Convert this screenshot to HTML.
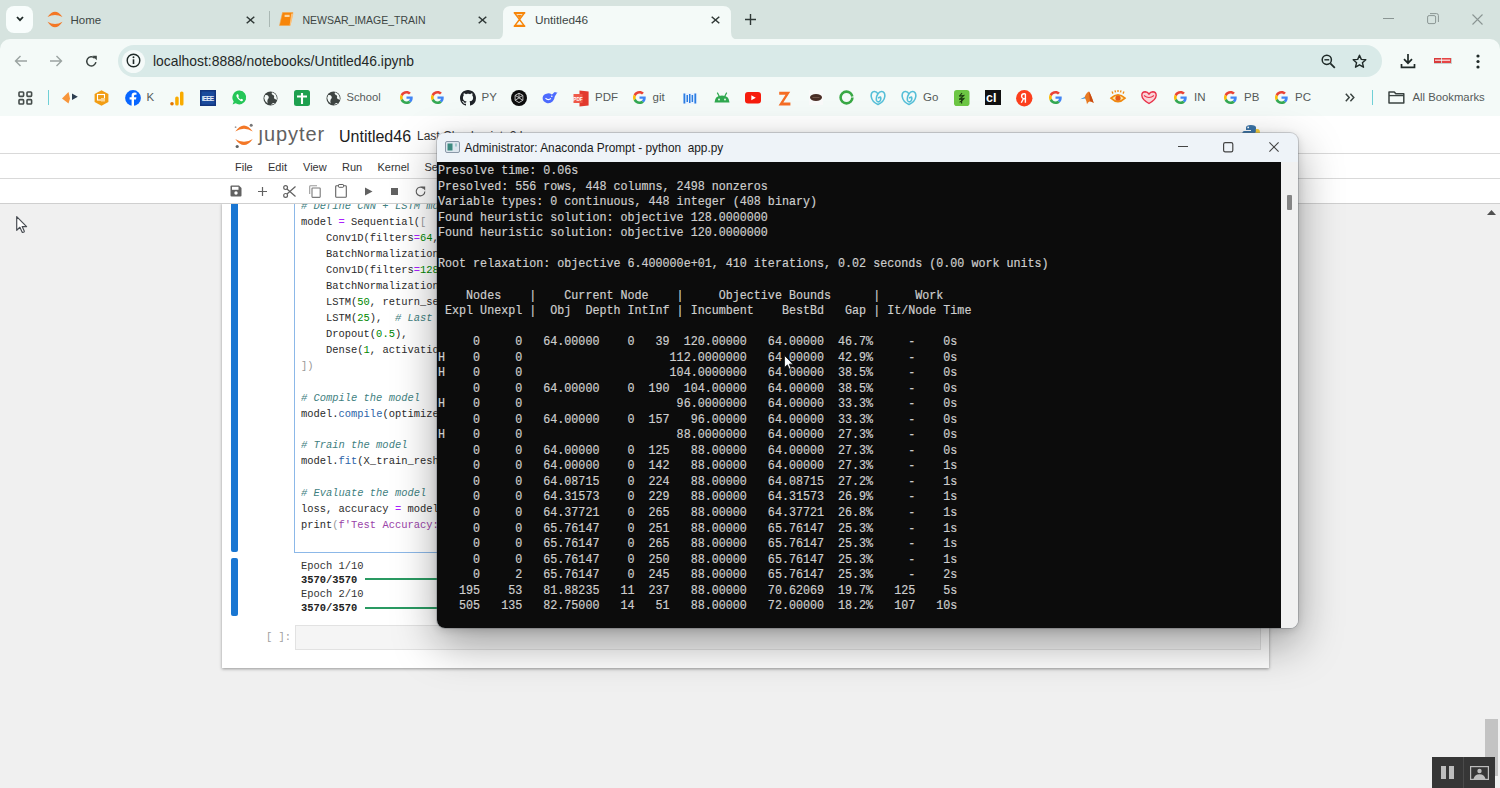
<!DOCTYPE html>
<html><head><meta charset="utf-8">
<style>
*{margin:0;padding:0;box-sizing:border-box}
html,body{width:1500px;height:788px;overflow:hidden;background:#f0f0f0;font-family:"Liberation Sans",sans-serif}
.a{position:absolute}
.t{position:absolute;white-space:pre;line-height:1}
svg{position:absolute;overflow:visible}
#tabbar{left:0;top:0;width:1500px;height:39px;background:#d6e3df}
#toolbar{left:0;top:39px;width:1500px;height:77px;background:#f4faf8;border-radius:10px 10px 0 0}
#omni{left:117.5px;top:45.3px;width:1264.5px;height:32px;border-radius:16px;background:#d9eae8}
#page{left:0;top:116px;width:1500px;height:672px;background:#f0f0f0}
#jhead{left:0;top:116px;width:1500px;height:38px;background:#fff;border-bottom:1px solid #d9d9d9}
#menubar{left:0;top:154px;width:1500px;height:25px;background:#fff;border-bottom:1px solid #d9d9d9}
#tbar{left:0;top:179px;width:1500px;height:24.6px;background:#fff;border-bottom:1px solid #cfcfcf}
#nb{left:222px;top:203px;width:1047px;height:465px;background:#fff;box-shadow:0 1px 3px rgba(0,0,0,.38)}
.code{position:absolute;left:301px;white-space:pre;font-family:"Liberation Mono",monospace;font-size:11.38px;line-height:15.93px;color:#2a2a2a;transform:scaleX(0.917);transform-origin:0 0}
.cm{color:#3f7f7f;font-style:italic}
.op{color:#aa22ff}
.nu{color:#008800}
.pr{color:#2b63a8}
.st{color:#9a3fa8}
#term{left:437px;top:133px;width:861px;height:495px;border-radius:8px;background:#eef3f8;box-shadow:0 16px 44px rgba(0,0,0,.36),0 2px 8px rgba(0,0,0,.14),0 0 0 1px rgba(110,120,130,.28);overflow:hidden}
#tblack{left:0;top:28.5px;width:843.5px;height:466.5px;background:#0c0c0c}
#tscroll{left:843.5px;top:28.5px;width:18px;height:466.5px;background:#f1f1f1}
.tl{position:absolute;left:0.9px;top:30.3px;white-space:pre;color:#d0d0d0;-webkit-text-stroke:0.2px #c8c8c8;font-size:12.7px;transform:scaleX(0.9218);transform-origin:0 0;line-height:15.525px;font-family:"Liberation Mono",monospace}

</style></head><body>
<div id="tabbar" class="a"></div>
<div class="a" style="left:0;top:30px;width:1500px;height:30px;background:#d6e3df"></div>
<div id="toolbar" class="a"></div>
<!-- tab dropdown -->
<div class="a" style="left:6px;top:6px;width:27px;height:27px;border-radius:8px;background:#f8fdfc"></div>
<svg style="left:16px;top:16px" width="8" height="6"><path d="M1 1 L4 4.2 L7 1" fill="none" stroke="#1f2a28" stroke-width="1.8"/></svg>
<!-- home tab -->
<svg style="left:47px;top:11px" width="16" height="17" viewBox="0 0 16 17"><path d="M0.5 6 Q8 -4.6 15.5 6 Q8 2 0.5 6Z" fill="#f37726"/><path d="M0.5 10.7 Q8 21.9 15.5 10.7 Q8 15.3 0.5 10.7Z" fill="#f37726"/></svg>
<div class="t" style="left:70.5px;top:15px;font-size:11.5px;color:#3d4644">Home</div>
<svg style="left:246px;top:15.5px" width="9" height="8"><path d="M0.7 0.7 L8.3 7.3 M8.3 0.7 L0.7 7.3" stroke="#2f3836" stroke-width="1.5"/></svg>
<div class="a" style="left:269px;top:11px;width:1px;height:16px;background:#aab8b4"></div>
<!-- newsar tab -->
<svg style="left:279px;top:12px" width="15" height="14" viewBox="0 0 15 14"><path d="M3.5 0.5 H14 L11 13.5 H0.5Z" fill="#f7860a" stroke="#f4a64a" stroke-width="0.6"/><rect x="5.6" y="2.8" width="5" height="2.2" fill="#fcd6a0"/><path d="M12.2 1.5 L14.3 2 L11.6 13.5 H10.6Z" fill="#fbc27d"/></svg>
<div class="t" style="left:302.5px;top:15.2px;font-size:10.5px;color:#3d4644">NEWSAR_IMAGE_TRAIN</div>
<svg style="left:478px;top:15.5px" width="9" height="8"><path d="M0.7 0.7 L8.3 7.3 M8.3 0.7 L0.7 7.3" stroke="#2f3836" stroke-width="1.5"/></svg>
<!-- active tab -->
<svg style="left:495px;top:6px" width="246" height="34" viewBox="0 0 246 34"><path d="M0 34 Q8 34 8 26 V8 Q8 0 16 0 H228 Q236 0 236 8 V26 Q236 34 244 34 Z" fill="#f4faf8"/></svg>
<svg style="left:513px;top:12px" width="13" height="15" viewBox="0 0 13 15"><path d="M0.8 0.8 H12.2 M0.8 14.2 H12.2" stroke="#f7860a" stroke-width="1.6"/><path d="M2 1.6 L6.5 7.5 L11 1.6Z M2 13.4 L6.5 7.5 L11 13.4Z" fill="none" stroke="#f7860a" stroke-width="1.5"/><path d="M4 3 H9 L6.5 6.3Z" fill="#f7860a"/></svg>
<div class="t" style="left:535px;top:14.8px;font-size:11.8px;color:#3d4644">Untitled46</div>
<svg style="left:710.5px;top:15.5px" width="9" height="8"><path d="M0.7 0.7 L8.3 7.3 M8.3 0.7 L0.7 7.3" stroke="#2f3836" stroke-width="1.5"/></svg>
<svg style="left:745px;top:14px" width="11" height="11"><path d="M5.5 0 V11 M0 5.5 H11" stroke="#2f3836" stroke-width="1.4"/></svg>
<!-- window controls -->
<div class="a" style="left:1383px;top:18px;width:11px;height:1px;background:#8a9593"></div>
<svg style="left:1427px;top:13px" width="12" height="12"><rect x="0.6" y="2.6" width="8" height="8" rx="1.5" fill="none" stroke="#8a9593" stroke-width="1"/><path d="M3 0.6 H9.5 Q11.4 0.6 11.4 2.5 V9" fill="none" stroke="#8a9593" stroke-width="1"/></svg>
<svg style="left:1472px;top:14px" width="11" height="11"><path d="M0.5 0.5 L10.5 10.5 M10.5 0.5 L0.5 10.5" stroke="#8a9593" stroke-width="1.1"/></svg>
<!-- toolbar -->
<svg style="left:14px;top:55px" width="14" height="12"><path d="M13 6 H1.5 M6.5 1 L1.5 6 L6.5 11" fill="none" stroke="#9aa3a1" stroke-width="1.4"/></svg>
<svg style="left:49px;top:55px" width="14" height="12"><path d="M1 6 H12.5 M7.5 1 L12.5 6 L7.5 11" fill="none" stroke="#9aa3a1" stroke-width="1.4"/></svg>
<svg style="left:85px;top:55px" width="13" height="13" viewBox="0 0 13 13"><path d="M10.9 7.2 A4.6 4.6 0 1 1 9.6 3.1" fill="none" stroke="#3b4442" stroke-width="1.5"/><path d="M7.4 0.8 H11.8 V5.2Z" fill="#3b4442"/></svg>
<div id="omni" class="a"></div>
<div class="a" style="left:122px;top:49.8px;width:23px;height:23px;border-radius:12px;background:#f5faf9"></div>
<svg style="left:126px;top:53px" width="15" height="15"><circle cx="7.5" cy="7.5" r="6.3" fill="none" stroke="#1f2a28" stroke-width="1.4"/><path d="M7.5 6.3 V11" stroke="#1f2a28" stroke-width="1.6"/><circle cx="7.5" cy="4.2" r="0.95" fill="#1f2a28"/></svg>
<div class="t" style="left:153px;top:54.9px;font-size:13.9px;color:#1f2726">localhost:8888/notebooks/Untitled46.ipynb</div>
<svg style="left:1321px;top:54px" width="15" height="15"><circle cx="5.8" cy="5.8" r="4.6" fill="none" stroke="#1f2a28" stroke-width="1.5"/><path d="M3.4 5.8 H8.2" stroke="#1f2a28" stroke-width="1.4"/><path d="M9.3 9.3 L13.8 13.8" stroke="#1f2a28" stroke-width="1.8"/></svg>
<svg style="left:1352px;top:54px" width="15" height="15" viewBox="0 0 15 15"><path d="M7.5 1.2 L9.3 5.4 L13.8 5.7 L10.4 8.7 L11.5 13.2 L7.5 10.8 L3.5 13.2 L4.6 8.7 L1.2 5.7 L5.7 5.4Z" fill="none" stroke="#1f2a28" stroke-width="1.4" stroke-linejoin="round"/></svg>
<svg style="left:1400px;top:53px" width="16" height="16"><path d="M8 1 V10 M4 6.2 L8 10.2 L12 6.2" fill="none" stroke="#1f2a28" stroke-width="1.7"/><path d="M1.5 11 V14.4 H14.5 V11" fill="none" stroke="#1f2a28" stroke-width="1.7"/></svg>
<svg style="left:1434px;top:57px" width="19" height="8"><rect x="0" y="1" width="18" height="6" fill="#c9d3d1"/><rect x="0" y="1" width="7" height="5" fill="#d93a3a"/><rect x="8" y="1" width="9" height="5" fill="#e64545"/><rect x="1" y="2.5" width="15" height="1.5" fill="#fff" opacity=".7"/></svg>
<svg style="left:1476px;top:54px" width="4" height="15"><circle cx="2" cy="2" r="1.6" fill="#1f2a28"/><circle cx="2" cy="7.5" r="1.6" fill="#1f2a28"/><circle cx="2" cy="13" r="1.6" fill="#1f2a28"/></svg>
<!-- bookmarks -->
<svg style="left:18px;top:90.5px" width="15" height="14"><g fill="none" stroke="#444c4a" stroke-width="1.6"><rect x="1" y="1" width="4.6" height="4.4" rx="0.8"/><rect x="9" y="1" width="4.6" height="4.4" rx="0.8"/><rect x="1" y="8.6" width="4.6" height="4.4" rx="0.8"/><rect x="9" y="8.6" width="4.6" height="4.4" rx="0.8"/></g></svg>
<div class="a" style="left:47.5px;top:90px;width:1.5px;height:15px;background:#6fd0d6"></div>
<svg style="left:62px;top:92px" width="17" height="12"><path d="M0 6.5 L6.5 0 L8 6.5 L6.5 11.5Z" fill="#f7953a"/><path d="M10 1.5 L15.8 4.8 L10 8Z" fill="#2c3e50"/></svg>
<svg style="left:94px;top:89.5px" width="15" height="16"><path d="M7.5 0.3 L14.4 4 V12 L7.5 15.7 L0.6 12 V4Z" fill="#f29d13"/><rect x="3.5" y="4.5" width="7" height="5.5" fill="none" stroke="#fff" stroke-width="1.1"/><rect x="7" y="8" width="4" height="3.5" fill="#fbd493"/></svg>
<svg style="left:125px;top:89.5px" width="16" height="16"><circle cx="8" cy="8" r="7.9" fill="#0866ff"/><path d="M9 16 V9.6 H11 L11.4 7.3 H9 V5.9 Q9 4.8 10.2 4.8 H11.5 V2.8 Q10.6 2.6 9.7 2.6 Q6.6 2.6 6.6 5.7 V7.3 H4.6 V9.6 H6.6 V16Z" fill="#fff"/></svg>
<div class="t" style="left:146.5px;top:91.8px;font-size:11.5px;color:#555b5a">K</div>
<svg style="left:170px;top:90.5px" width="14" height="15"><rect x="10" y="0.5" width="3.5" height="14" rx="1.6" fill="#f9ab00"/><rect x="5.2" y="5.5" width="3.5" height="9" rx="1.6" fill="#f9ab00"/><circle cx="2" cy="12.8" r="1.8" fill="#e37400"/></svg>
<svg style="left:200px;top:90px" width="16" height="16"><rect width="16" height="16" fill="#12357e"/><rect x="1.5" y="1.5" width="13" height="13" fill="#1a4a9c"/><text x="8" y="11" font-family="Liberation Sans" font-size="6.6" font-weight="bold" fill="#e8eef8" text-anchor="middle" textLength="12.5">IEEE</text></svg>
<svg style="left:232px;top:89.8px" width="15" height="15.5" viewBox="0 0 15 15.5"><path d="M7.6 0.6 A6.9 6.9 0 1 1 3.6 13.3 L0.6 14.6 L1.7 11.5 A6.9 6.9 0 0 1 7.6 0.6Z" fill="#25c658"/><path d="M5 4.2 Q4 5 4.6 6.8 Q5.8 9.6 8.6 10.9 Q10.2 11.5 10.9 10.5 L10.9 9.5 L9.3 8.7 L8.6 9.4 Q7 8.6 6.2 7 L6.9 6.3 L6.1 4.3Z" fill="#fff"/></svg>
<svg style="left:263px;top:90.5px" width="15" height="15" viewBox="0 0 15 15"><circle cx="7.5" cy="7.5" r="7" fill="#3d4442"/><path d="M2.3 4 Q4.5 3.5 5.5 5.3 Q6.5 7.3 4.8 8.2 Q4 9.5 4.6 12.5 Q1.5 10 1.2 7Z M9 1.2 Q8.2 2.8 9.2 3.6 Q11 4 11.2 5.5 Q10.3 7.2 11.8 8 Q13.6 8.6 13.8 9.3 Q14.3 5 11.5 2.5Z M8 13.8 Q9 12.3 10.5 12 Q12 12.2 12.4 11.8 Q11 13.4 8 13.8Z" fill="#f4faf8"/></svg>
<svg style="left:293.5px;top:89.8px" width="16" height="16"><rect width="16" height="16" rx="2.5" fill="#1ea04f"/><path d="M8 3 V14 M3 6.5 H13" stroke="#fff" stroke-width="2.1"/></svg>
<svg style="left:326px;top:90.5px" width="15" height="15" viewBox="0 0 15 15"><circle cx="7.5" cy="7.5" r="7" fill="#3d4442"/><path d="M2.3 4 Q4.5 3.5 5.5 5.3 Q6.5 7.3 4.8 8.2 Q4 9.5 4.6 12.5 Q1.5 10 1.2 7Z M9 1.2 Q8.2 2.8 9.2 3.6 Q11 4 11.2 5.5 Q10.3 7.2 11.8 8 Q13.6 8.6 13.8 9.3 Q14.3 5 11.5 2.5Z M8 13.8 Q9 12.3 10.5 12 Q12 12.2 12.4 11.8 Q11 13.4 8 13.8Z" fill="#f4faf8"/></svg>
<div class="t" style="left:346.5px;top:91.8px;font-size:11.2px;color:#555b5a">School</div>
<svg width="0" height="0" style="left:0;top:0"><defs>
<symbol id="gg" viewBox="0 0 48 48"><path fill="#EA4335" d="M24 9.5c3.54 0 6.71 1.22 9.21 3.6l6.85-6.85C35.9 2.38 30.47 0 24 0 14.62 0 6.51 5.38 2.56 13.22l7.98 6.19C12.43 13.72 17.74 9.5 24 9.5z"/><path fill="#4285F4" d="M46.98 24.55c0-1.57-.15-3.09-.38-4.55H24v9.02h12.94c-.58 2.96-2.26 5.48-4.78 7.18l7.73 6c4.51-4.18 7.09-10.36 7.09-17.65z"/><path fill="#FBBC05" d="M10.53 28.59c-.48-1.45-.76-2.99-.76-4.59s.27-3.14.76-4.59l-7.98-6.19C.92 16.46 0 20.12 0 24c0 3.88.92 7.54 2.56 10.78l7.97-6.19z"/><path fill="#34A853" d="M24 48c6.48 0 11.93-2.13 15.89-5.81l-7.73-6c-2.15 1.45-4.92 2.3-8.16 2.3-6.26 0-11.57-4.22-13.47-9.91l-7.98 6.19C6.51 42.62 14.62 48 24 48z"/></symbol>
<symbol id="globe" viewBox="0 0 15 15"><circle cx="7.5" cy="7.5" r="7" fill="#3d4442"/><path d="M2.3 4 Q4.5 3.5 5.5 5.3 Q6.5 7.3 4.8 8.2 Q4 9.5 4.6 12.5 Q1.5 10 1.2 7Z M9 1.2 Q8.2 2.8 9.2 3.6 Q11 4 11.2 5.5 Q10.3 7.2 11.8 8 Q13.6 8.6 13.8 9.3 Q14.3 5 11.5 2.5Z" fill="#f4faf8"/></symbol>
<symbol id="gd" viewBox="0 0 16 16"><path d="M8 14.5 Q2 12 1.2 6.5 Q0.8 2 4.2 1.5 Q6.5 1.3 8 3.8 Q9.5 1.3 11.8 1.5 Q15.2 2 14.8 6.5 Q14 12 8 14.5Z M8 3.8 Q5.8 7 6.5 10.5 Q7.5 12.5 9.5 11.5 Q11.5 10 10.5 7 L8 8" fill="none" stroke="#55bfd8" stroke-width="1.6" stroke-linejoin="round"/></symbol>
</defs></svg>
<svg style="left:399.5px;top:91px" width="13" height="13"><use href="#gg" width="13" height="13"/></svg>
<svg style="left:430.5px;top:91px" width="13" height="13"><use href="#gg" width="13" height="13"/></svg>
<svg style="left:460px;top:89.8px" width="16" height="16" viewBox="0 0 16 16"><path fill="#1f2328" d="M8 0C3.58 0 0 3.58 0 8c0 3.54 2.29 6.53 5.47 7.59.4.07.55-.17.55-.38 0-.19-.01-.82-.01-1.49-2.01.37-2.53-.49-2.69-.94-.09-.23-.48-.94-.82-1.13-.28-.15-.68-.52-.01-.53.63-.01 1.08.58 1.23.82.72 1.21 1.87.87 2.33.66.07-.52.28-.87.51-1.07-1.78-.2-3.64-.89-3.64-3.95 0-.87.31-1.59.82-2.15-.08-.2-.36-1.02.08-2.12 0 0 .67-.21 2.2.82.64-.18 1.32-.27 2-.27.68 0 1.36.09 2 .27 1.53-1.04 2.2-.82 2.2-.82.44 1.1.16 1.92.08 2.12.51.56.82 1.27.82 2.15 0 3.07-1.87 3.75-3.65 3.95.29.25.54.73.54 1.48 0 1.07-.01 1.93-.01 2.2 0 .21.15.46.55.38A8.013 8.013 0 0016 8c0-4.42-3.58-8-8-8z"/></svg>
<div class="t" style="left:481.5px;top:91.8px;font-size:11.5px;color:#555b5a">PY</div>
<svg style="left:510.5px;top:89.8px" width="16" height="16"><circle cx="8" cy="8" r="8" fill="#0d0d0d"/><g fill="none" stroke="#cfcfcf" stroke-width="0.9"><path d="M8 3.2 L11.9 5.4 V10.3 L8 12.6 L4.1 10.3 V5.4Z"/><path d="M8 3.2 V7.9 L11.9 10.3 M8 7.9 L4.1 10.3 M4.1 5.4 L8 7.6 L11.9 5.4"/></g></svg>
<svg style="left:541.5px;top:91px" width="16" height="13" viewBox="0 0 16 13"><path d="M15.5 1.2 Q14.2 1.8 13.6 1.2 Q12.8 0.6 12 1.6 Q11 3 9.8 3.4 Q8 2.2 5.5 2.4 Q1.2 2.8 0.6 6.8 Q0.5 10.6 4.6 12 Q8.2 12.8 10.8 10.2 Q12.6 8 12.8 5.6 Q13.6 4 15.5 1.2Z" fill="#4d6bfe"/><path d="M3.5 7.2 Q6 9.8 9 7.6" fill="none" stroke="#fff" stroke-width="1.2"/><circle cx="9.8" cy="5.2" r="0.8" fill="#fff"/></svg>
<svg style="left:573px;top:89.5px" width="16" height="17" viewBox="0 0 16 17"><path d="M6.5 0.5 L15.6 1.5 V15.5 L6.5 16.5Z" fill="#e23a2e"/><rect x="0.5" y="4" width="9" height="9" fill="#ef5a4a"/><text x="5" y="10.6" font-family="Liberation Sans" font-size="4.8" font-weight="bold" fill="#fff" text-anchor="middle">PDF</text></svg>
<div class="t" style="left:595px;top:91.8px;font-size:11.5px;color:#555b5a">PDF</div>
<svg style="left:632.5px;top:91px" width="13" height="13"><use href="#gg" width="13" height="13"/></svg>
<div class="t" style="left:652.5px;top:91.8px;font-size:11.5px;color:#555b5a">git</div>
<svg style="left:683px;top:90.5px" width="14" height="15"><rect x="0" y="2" width="14" height="11" fill="#e9f2ff"/><g fill="#2a7de1"><rect x="0.5" y="2.5" width="1.8" height="10"/><rect x="3.5" y="4" width="1.5" height="7"/><rect x="6" y="3" width="1.5" height="9"/><rect x="8.6" y="4" width="1.5" height="7"/><rect x="11.4" y="2.5" width="1.8" height="10"/></g></svg>
<svg style="left:714px;top:92px" width="16" height="11" viewBox="0 0 16 11"><path d="M0.5 10.5 Q0.8 3.8 8 3.6 Q15.2 3.8 15.5 10.5Z" fill="#2fa84f"/><path d="M3.3 0.6 L5.2 4.2 M12.7 0.6 L10.8 4.2" stroke="#2fa84f" stroke-width="1.2"/><circle cx="5" cy="7.5" r="0.9" fill="#f4faf8"/><circle cx="11" cy="7.5" r="0.9" fill="#f4faf8"/></svg>
<svg style="left:745px;top:91.5px" width="16" height="12"><rect width="16" height="11.5" rx="3" fill="#f61c0d"/><path d="M6.3 3.3 L10.8 5.75 L6.3 8.2Z" fill="#fff"/></svg>
<svg style="left:778px;top:90.5px" width="13" height="15" viewBox="0 0 13 15"><path d="M1.2 0.8 H12.2 L5.3 11.4 H12.4 V14.4 H0.6 L7.5 3.8 H1.2Z" fill="#f56d24"/></svg>
<svg style="left:809px;top:90px" width="14" height="15"><rect x="0" y="0" width="14" height="15" fill="#fafafa"/><ellipse cx="7" cy="7.5" rx="6" ry="3.4" fill="#4a2d25"/><path d="M3.5 7.5 H10.5" stroke="#8a6d60" stroke-width="0.6"/></svg>
<svg style="left:839px;top:90px" width="15" height="15"><circle cx="7.5" cy="7.5" r="5.9" fill="none" stroke="#39a845" stroke-width="2.6" stroke-dasharray="35 2"/></svg>
<svg style="left:870px;top:89.5px" width="16" height="16"><use href="#gd" width="16" height="16"/></svg>
<svg style="left:901px;top:89.5px" width="16" height="16"><use href="#gd" width="16" height="16"/></svg>
<div class="t" style="left:923px;top:91.8px;font-size:11.5px;color:#555b5a">Go</div>
<svg style="left:954px;top:89.5px" width="15.5" height="16"><rect width="15.5" height="16" rx="2.8" fill="#6cc644"/><path d="M8 3 Q6.2 5.5 5.2 6.2 L9.6 5.6 Q7.5 8 5.2 9.3 L9.8 8.6 Q8 11.2 5.6 12.2 M7.6 9 V13.5" fill="none" stroke="#1d3d12" stroke-width="1.2"/></svg>
<svg style="left:985px;top:90px" width="16" height="15"><rect width="16" height="15" fill="#111"/><text x="1" y="12.3" font-family="Liberation Sans" font-size="12.5" font-weight="bold" fill="#fff">cl</text></svg>
<svg style="left:1016px;top:89.5px" width="16.5" height="16.5"><circle cx="8.25" cy="8.25" r="8.2" fill="#fc3f1d"/><path d="M9.4 3.8 H8.2 Q5.6 3.8 5.6 6.3 Q5.6 8 7.4 8.7 L5.3 12.8 M9.4 3.8 V12.8 M9.4 8.7 H7.8" fill="none" stroke="#fff" stroke-width="1.4"/></svg>
<svg style="left:1049px;top:91px" width="13" height="13"><use href="#gg" width="13" height="13"/></svg>
<svg style="left:1080px;top:90.5px" width="14" height="14" viewBox="0 0 14 14"><path d="M0.3 8.3 L4.6 6 L6.2 7.2 Z" fill="#3a8fd6"/><path d="M4.6 6 Q7 0.8 9 0.6 Q10.5 2.5 13.7 12 Q11.5 10 9.6 10.6 Q7.8 11.5 7 13.2 Q6.5 9.5 4.6 6Z" fill="#e87a22"/><path d="M9 0.6 Q10.5 2.5 13.7 12 Q11.5 10 10 10.2Z" fill="#c94b12"/></svg>
<svg style="left:1110px;top:90px" width="16" height="14" viewBox="0 0 16 14"><path d="M1 8.2 Q8 1.4 15 8.2 Q8 15 1 8.2Z" fill="#fde9a8" stroke="#f08a10" stroke-width="1.7"/><circle cx="8" cy="8.2" r="2.6" fill="#e55a1a"/><path d="M3 3.6 L2 1.5 M5.5 2.4 L5 0.3 M8 2 V0 M10.5 2.4 L11 0.3 M13 3.6 L14 1.5" stroke="#f08a10" stroke-width="1.3"/></svg>
<svg style="left:1141px;top:91px" width="16" height="13" viewBox="0 0 16 13"><path d="M8 12.5 Q1 8.5 0.8 4.2 Q1 0.8 4.2 0.8 Q6.6 0.9 8 3 Q9.4 0.9 11.8 0.8 Q15 0.8 15.2 4.2 Q15 8.5 8 12.5Z" fill="#fbd3d8" stroke="#e8334a" stroke-width="1.4"/><path d="M3 4.5 Q8 8.5 13 4.5" fill="none" stroke="#e8334a" stroke-width="1.1"/></svg>
<svg style="left:1174px;top:91px" width="13" height="13"><use href="#gg" width="13" height="13"/></svg>
<div class="t" style="left:1194px;top:91.8px;font-size:11.5px;color:#555b5a">IN</div>
<svg style="left:1224px;top:91px" width="13" height="13"><use href="#gg" width="13" height="13"/></svg>
<div class="t" style="left:1244px;top:91.8px;font-size:11.5px;color:#555b5a">PB</div>
<svg style="left:1275px;top:91px" width="13" height="13"><use href="#gg" width="13" height="13"/></svg>
<div class="t" style="left:1295px;top:91.8px;font-size:11.5px;color:#555b5a">PC</div>
<svg style="left:1345px;top:93px" width="10" height="9"><path d="M0.8 0.8 L4.2 4.5 L0.8 8.2 M5.4 0.8 L8.8 4.5 L5.4 8.2" fill="none" stroke="#3b4442" stroke-width="1.5"/></svg>
<div class="a" style="left:1371.5px;top:90px;width:1.5px;height:15px;background:#6fd0d6"></div>
<svg style="left:1388px;top:90.5px" width="17" height="13"><path d="M1 1 H6.3 L7.8 2.8 H15.8 V12 H1Z" fill="none" stroke="#3b4442" stroke-width="1.5" stroke-linejoin="round"/><path d="M1 4.6 H15.8" stroke="#3b4442" stroke-width="1.3"/></svg>
<div class="t" style="left:1412.5px;top:91.8px;font-size:11.3px;color:#555b5a">All Bookmarks</div>
<div id="page" class="a"></div>
<div id="nb" class="a"></div>
<!-- blue bars -->
<div class="a" style="left:231px;top:190px;width:7px;height:362px;background:#1976d2;border-radius:0 0 2px 2px"></div>
<div class="a" style="left:231px;top:557.5px;width:7px;height:58px;background:#1976d2;border-radius:2px"></div>
<!-- code input border -->
<div class="a" style="left:294px;top:190px;width:980px;height:362.5px;border:1px solid #8cb8e8;border-left-width:1.5px;background:#fff"></div>
<div class="code" style="top:199.4px"><span class="cm"># Define CNN + LSTM model</span>
model <span class="op">=</span> Sequential(<span style="color:#999">[</span>
    Conv1D(filters<span class="op">=</span><span class="nu">64</span>, kernel_size<span class="op">=</span><span class="nu">3</span>, activation<span class="op">=</span><span class="st">'relu'</span>)
    BatchNormalization(),
    Conv1D(filters<span class="op">=</span><span class="nu">128</span>, kernel_size<span class="op">=</span><span class="nu">3</span>, activation<span class="op">=</span><span class="st">'relu'</span>)
    BatchNormalization(),
    LSTM(<span class="nu">50</span>, return_sequences<span class="op">=</span>True),
    LSTM(<span class="nu">25</span>),  <span class="cm"># Last LSTM layer</span>
    Dropout(<span class="nu">0.5</span>),
    Dense(<span class="nu">1</span>, activation<span class="op">=</span><span class="st">'sigmoid'</span>)
<span style="color:#999">])</span>

<span class="cm"># Compile the model</span>
model.<span class="pr">compile</span>(optimizer<span class="op">=</span><span class="st">'adam'</span>)

<span class="cm"># Train the model</span>
model.<span class="pr">fit</span>(X_train_reshaped, y_train)

<span class="cm"># Evaluate the model</span>
loss, accuracy <span class="op">=</span> model.evaluate(X_test)
print<span style="color:#999">(</span><span class="st">f'Test Accuracy: {accuracy}'</span>)
</div>
<!-- output -->
<div class="code" style="top:558.5px;line-height:14.3px;color:#333">Epoch 1/10
<b style="color:#222">3570/3570</b>
Epoch 2/10
<b style="color:#222">3570/3570</b></div>
<div class="a" style="left:365px;top:578px;width:80px;height:2px;background:#2a9a62"></div>
<div class="a" style="left:365px;top:607px;width:80px;height:2px;background:#2a9a62"></div>
<!-- empty cell -->
<div class="code" style="left:265.5px;top:630px;color:#a0a0a0">[ ]:</div>
<div class="a" style="left:294.5px;top:625px;width:966px;height:25px;border:1px solid #e2e2e2;background:#f5f5f5"></div>
<!-- header -->
<div id="jhead" class="a"></div>
<svg style="left:234px;top:123px" width="20" height="25" viewBox="0 0 20 25"><path d="M1.2 8.6 Q10 -3.6 18.8 8.6 Q10 2.8 1.2 8.6Z" fill="#f37726"/><path d="M1.2 15.9 Q10 28.2 18.8 15.9 Q10 21.6 1.2 15.9Z" fill="#f37726"/><circle cx="17.2" cy="2.2" r="1.5" fill="#767677"/><circle cx="3.2" cy="23.5" r="1.6" fill="#616262"/><circle cx="1.6" cy="4.2" r="0.9" fill="#9e9e9e"/></svg>
<div class="t" style="left:258.5px;top:123.5px;font-size:20px;color:#616161;letter-spacing:0.95px">ȷupyter</div>
<div class="t" style="left:339px;top:128.5px;font-size:16px;color:#1c1c1c">Untitled46</div>
<div class="t" style="left:417px;top:129.8px;font-size:12px;color:#333">Last Checkpoint: 2 hours ago</div>
<svg style="left:1241px;top:124px" width="20" height="20" viewBox="0 0 20 20"><path d="M9.8 1 Q5 1 5 3.5 V6 H10 V7 H3.5 Q1 7 1 11 Q1 15 3.5 15 H5.2 V12.5 Q5.2 10 8 10 H12.5 Q15 10 15 7.5 V3.5 Q15 1 9.8 1Z" fill="#3a73a6"/><circle cx="7.2" cy="3.4" r="0.9" fill="#fff"/><path d="M10.2 19 Q15 19 15 16.5 V14 H10 V13 H16.5 Q19 13 19 9 Q19 5 16.5 5 H14.8 V7.5 Q14.8 10 12 10 H7.5 Q5 10 5 12.5 V16.5 Q5 19 10.2 19Z" fill="#f7cf3d"/></svg>
<div id="menubar" class="a"></div>
<div class="t" style="left:235px;top:161.5px;font-size:11px;color:#333">File</div>
<div class="t" style="left:268px;top:161.5px;font-size:11px;color:#333">Edit</div>
<div class="t" style="left:303px;top:161.5px;font-size:11px;color:#333">View</div>
<div class="t" style="left:342px;top:161.5px;font-size:11px;color:#333">Run</div>
<div class="t" style="left:377.5px;top:161.5px;font-size:11px;color:#333">Kernel</div>
<div class="t" style="left:424.5px;top:161.5px;font-size:11px;color:#333">Settings</div>
<div id="tbar" class="a"></div>
<!-- toolbar icons -->
<svg style="left:230px;top:185px" width="12" height="12" viewBox="0 0 12 12"><path d="M0.5 1.5 Q0.5 0.5 1.5 0.5 H9 L11.5 3 V10.5 Q11.5 11.5 10.5 11.5 H1.5 Q0.5 11.5 0.5 10.5Z" fill="#616161"/><rect x="2" y="1.8" width="6.5" height="3" fill="#fff"/><circle cx="6" cy="8" r="1.7" fill="#fff"/></svg>
<svg style="left:258px;top:187px" width="9" height="9"><path d="M4.5 0 V9 M0 4.5 H9" stroke="#616161" stroke-width="1.2"/></svg>
<svg style="left:283px;top:184.5px" width="13" height="13" viewBox="0 0 13 13"><circle cx="2.6" cy="2.6" r="1.9" fill="none" stroke="#616161" stroke-width="1.2"/><circle cx="2.6" cy="10.4" r="1.9" fill="none" stroke="#616161" stroke-width="1.2"/><path d="M4 4 L12.5 11.5 M4 9 L12.5 1.5" stroke="#616161" stroke-width="1.2"/></svg>
<svg style="left:308.5px;top:184.5px" width="12" height="13" viewBox="0 0 12 13"><path d="M8 0.8 H1.5 Q0.7 0.8 0.7 1.6 V9" fill="none" stroke="#9a9a9a" stroke-width="1.1"/><rect x="3" y="3" width="8.2" height="9.4" rx="0.6" fill="none" stroke="#7a7a7a" stroke-width="1.1"/></svg>
<svg style="left:335px;top:184px" width="12" height="14" viewBox="0 0 12 14"><rect x="0.7" y="1.8" width="10.6" height="11.5" rx="0.8" fill="none" stroke="#616161" stroke-width="1.1"/><rect x="3.5" y="0.5" width="5" height="2.8" rx="0.6" fill="#fff" stroke="#616161" stroke-width="1"/></svg>
<svg style="left:364px;top:186.5px" width="9" height="9"><path d="M1 0.5 L8.5 4.5 L1 8.5Z" fill="#616161"/></svg>
<div class="a" style="left:390.5px;top:187.5px;width:7.5px;height:7.5px;background:#616161"></div>
<svg style="left:415px;top:185.5px" width="11" height="11" viewBox="0 0 11 11"><path d="M9.8 5.5 A4.3 4.3 0 1 1 8.4 2.3" fill="none" stroke="#616161" stroke-width="1.2"/><path d="M6.2 0.6 H10.2 V4.6Z" fill="#616161"/></svg>
<!-- right side scroll-up arrow -->
<svg style="left:1487px;top:209.5px" width="9" height="5"><path d="M0 5 L4.5 0 L9 5Z" fill="#505050"/></svg>
<!-- bottom-right scrollbar and buttons -->
<div class="a" style="left:1485px;top:718.5px;width:13px;height:57px;background:#c3c3c3"></div>
<div class="a" style="left:1432px;top:756.5px;width:63px;height:32px;background:#363636"></div>
<div class="a" style="left:1463px;top:756.5px;width:1px;height:32px;background:#4a4a4a"></div>
<div class="a" style="left:1441px;top:765.5px;width:4.5px;height:13.5px;background:#bdbdbd"></div>
<div class="a" style="left:1449px;top:765.5px;width:4.5px;height:13.5px;background:#bdbdbd"></div>
<svg style="left:1470px;top:765.5px" width="19" height="14" viewBox="0 0 19 14"><rect x="0.6" y="0.6" width="17.8" height="12.8" fill="none" stroke="#bdbdbd" stroke-width="1.2"/><circle cx="9.5" cy="5" r="2.2" fill="#bdbdbd"/><path d="M3.5 13 Q4.5 8.2 9.5 8.2 Q14.5 8.2 15.5 13Z" fill="#bdbdbd"/></svg>
<!-- mouse cursor left -->
<svg style="left:16px;top:215.5px" width="12" height="17" viewBox="0 0 12 17"><path d="M0.7 0.7 V14.3 L3.9 11.3 L6.1 16 Q6.6 16.6 7.4 16.3 L8 16 Q8.5 15.6 8.2 14.9 L6.2 10.6 H10.6Z" fill="#fff" stroke="#4a4e54" stroke-width="1.2" stroke-linejoin="round"/></svg>
<div id="term" class="a">
<div id="tblack" class="a"></div>
<div id="tscroll" class="a"></div>
<div class="a" style="left:849.5px;top:61.5px;width:5px;height:15.5px;background:#858585;border-radius:1px"></div>
<svg style="left:8px;top:7.5px" width="15" height="12" viewBox="0 0 15 12"><rect x="0.5" y="0.5" width="14" height="11" rx="1.5" fill="#dde6ee" stroke="#8a98a8" stroke-width="1"/><rect x="2.5" y="2.5" width="5" height="7" fill="#3c8a80"/><rect x="10" y="2.5" width="2" height="3" fill="#6aa" opacity=".5"/></svg>
<div class="t" style="left:27.5px;top:9.5px;font-size:11.85px;color:#1a1a1a">Administrator: Anaconda Prompt - python  app.py</div>
<div class="a" style="left:741px;top:13.2px;width:9.5px;height:1.1px;background:#444"></div>
<svg style="left:786px;top:9px" width="11" height="11"><rect x="0.6" y="0.6" width="9.2" height="9.2" rx="1.6" fill="none" stroke="#444" stroke-width="1.2"/></svg>
<svg style="left:832.3px;top:9px" width="10" height="10"><path d="M0.4 0.4 L9.6 9.6 M9.6 0.4 L0.4 9.6" stroke="#444" stroke-width="1.1"/></svg>
<div class="tl">Presolve time: 0.06s
Presolved: 556 rows, 448 columns, 2498 nonzeros
Variable types: 0 continuous, 448 integer (408 binary)
Found heuristic solution: objective 128.0000000
Found heuristic solution: objective 120.0000000

Root relaxation: objective 6.400000e+01, 410 iterations, 0.02 seconds (0.00 work units)

    Nodes    |    Current Node    |     Objective Bounds      |     Work
 Expl Unexpl |  Obj  Depth IntInf | Incumbent    BestBd   Gap | It/Node Time

     0     0   64.00000    0   39  120.00000   64.00000  46.7%     -    0s
H    0     0                     112.0000000   64.00000  42.9%     -    0s
H    0     0                     104.0000000   64.00000  38.5%     -    0s
     0     0   64.00000    0  190  104.00000   64.00000  38.5%     -    0s
H    0     0                      96.0000000   64.00000  33.3%     -    0s
     0     0   64.00000    0  157   96.00000   64.00000  33.3%     -    0s
H    0     0                      88.0000000   64.00000  27.3%     -    0s
     0     0   64.00000    0  125   88.00000   64.00000  27.3%     -    0s
     0     0   64.00000    0  142   88.00000   64.00000  27.3%     -    1s
     0     0   64.08715    0  224   88.00000   64.08715  27.2%     -    1s
     0     0   64.31573    0  229   88.00000   64.31573  26.9%     -    1s
     0     0   64.37721    0  265   88.00000   64.37721  26.8%     -    1s
     0     0   65.76147    0  251   88.00000   65.76147  25.3%     -    1s
     0     0   65.76147    0  265   88.00000   65.76147  25.3%     -    1s
     0     0   65.76147    0  250   88.00000   65.76147  25.3%     -    1s
     0     2   65.76147    0  245   88.00000   65.76147  25.3%     -    2s
   195    53   81.88235   11  237   88.00000   70.62069  19.7%   125    5s
   505   135   82.75000   14   51   88.00000   72.00000  18.2%   107   10s</div>
<svg style="left:346.5px;top:221.5px" width="10.4" height="14.7" viewBox="0 0 12 17"><path d="M0.6 0.6 V14.5 L3.9 11.4 L6.2 16.4 L8.3 15.5 L6.1 10.6 H10.5Z" fill="#fff" stroke="#111" stroke-width="0.9" stroke-linejoin="round"/></svg>
</div>
</body></html>
